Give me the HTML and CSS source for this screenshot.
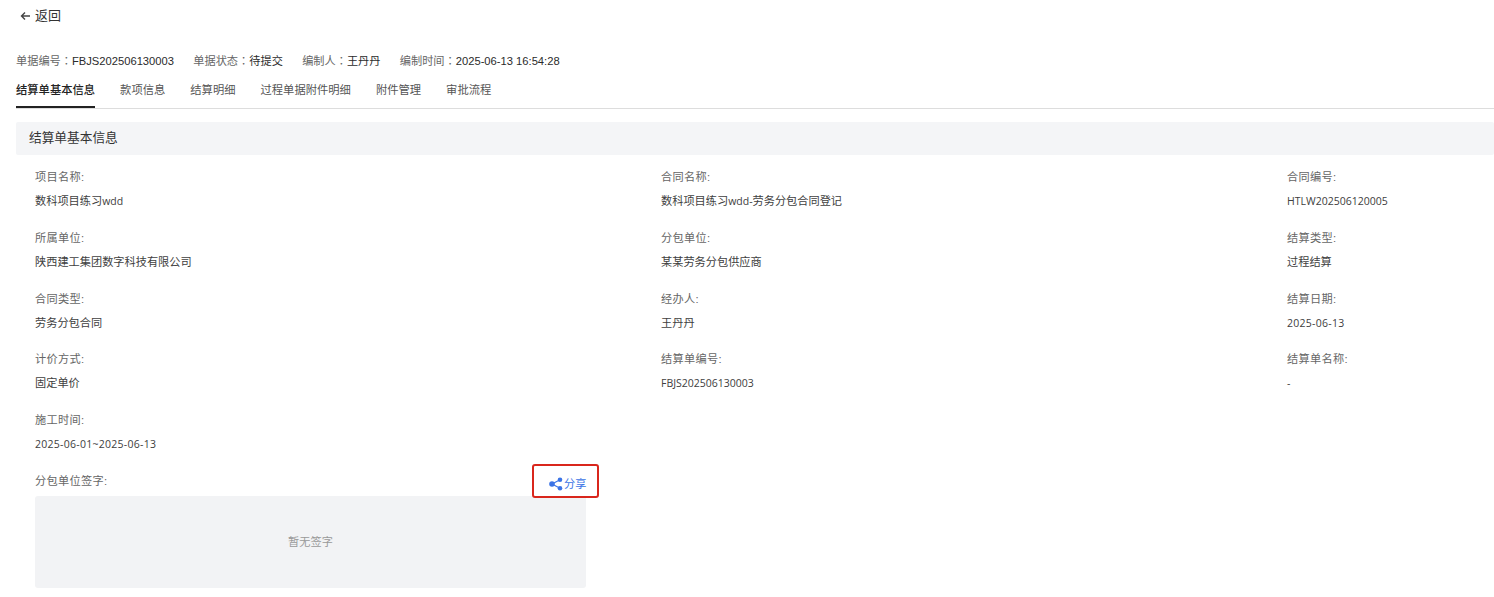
FILE: index.html
```html
<!DOCTYPE html>
<html lang="zh">
<head>
<meta charset="utf-8">
<title>结算单基本信息</title>
<link rel="stylesheet" href="styles.css">
</head>
<body>
<div class="back">
  <svg class="back-icon" width="11" height="10" viewBox="0 0 11 10" fill="none" stroke="#444" stroke-width="1.4"><path d="M10 5H1.500M5 1.500 1.500 5 5 8.500"/></svg>
  <span>返回</span>
</div>
<div class="meta">
  <span><i>单据编号<b lang="zh-Hant">：</b></i>FBJS202506130003</span>
  <span><i>单据状态<b lang="zh-Hant">：</b></i>待提交</span>
  <span><i>编制人<b lang="zh-Hant">：</b></i>王丹丹</span>
  <span><i>编制时间<b lang="zh-Hant">：</b></i>2025-06-13 16:54:28</span>
</div>
<nav class="tabs">
  <a class="tab active">结算单基本信息</a>
  <a class="tab">款项信息</a>
  <a class="tab">结算明细</a>
  <a class="tab">过程单据附件明细</a>
  <a class="tab">附件管理</a>
  <a class="tab">审批流程</a>
</nav>
<h2 class="section">结算单基本信息</h2>
<div class="grid">
  <div class="field"><label>项目名称:</label><p>数科项目练习<span class="lat">wdd</span></p></div>
  <div class="field"><label>合同名称:</label><p>数科项目练习<span class="lat">wdd-</span>劳务分包合同登记</p></div>
  <div class="field"><label>合同编号:</label><p class="lat">HTLW202506120005</p></div>
  <div class="field"><label>所属单位:</label><p>陕西建工集团数字科技有限公司</p></div>
  <div class="field"><label>分包单位:</label><p>某某劳务分包供应商</p></div>
  <div class="field"><label>结算类型:</label><p>过程结算</p></div>
  <div class="field"><label>合同类型:</label><p>劳务分包合同</p></div>
  <div class="field"><label>经办人:</label><p>王丹丹</p></div>
  <div class="field"><label>结算日期:</label><p class="lat date">2025-06-13</p></div>
  <div class="field"><label>计价方式:</label><p>固定单价</p></div>
  <div class="field"><label>结算单编号:</label><p class="lat">FBJS202506130003</p></div>
  <div class="field"><label>结算单名称:</label><p class="lat">-</p></div>
  <div class="field"><label>施工时间:</label><p class="lat date">2025-06-01~2025-06-13</p></div>
</div>
<div class="sign">
  <div class="sign-head">
    <label>分包单位签字:</label>
    <button class="share" type="button">
      <svg width="14" height="14" viewBox="0 0 14 14" fill="#3b74e6"><circle cx="3" cy="7" r="2.800"/><circle cx="11" cy="2.800" r="2.300"/><circle cx="11" cy="11.200" r="2.300"/><path d="M3 7 11 2.800M3 7l8 4.200" stroke="#3b74e6" stroke-width="1.200"/></svg>
      <span>分享</span>
    </button>
  </div>
  <div class="sign-box">暂无签字</div>
</div>
</body>
</html>
```
FILE: styles.css
```css
* { box-sizing: border-box; }
html, body { margin: 0; }
body {
  height: 597px;
  overflow: hidden;
  padding-left: 16px;
  background: #fff;
  color: #2b2b2b;
  font-family: "Liberation Sans", "Noto Sans CJK SC", sans-serif;
  font-size: 11.2px;
  line-height: 16px;
}
.back {
  display: flex;
  align-items: center;
  gap: 4px;
  height: 32px;
  padding-left: 4px;
  font-size: 13px;
  color: #333;
}
.back-icon { flex: none; }
.meta {
  display: flex;
  gap: 19.300px;
  margin-top: 20px;
  height: 17px;
}
.meta i { font-style: normal; color: #666; }
.meta b { font-family: "Noto Sans CJK TC", sans-serif; font-weight: 400; }
.tabs {
  display: flex;
  gap: 25px;
  margin-top: 7px;
  height: 33px;
  border-bottom: 1px solid #ddd;
  font-size: 11.300px;
}
.tab { color: #555; height: 32px; padding-top: 6px; }
.tab.active {
  color: #222;
  font-weight: 500;
  border-bottom: 2px solid #222;
}
.section {
  margin: 13px 0 0;
  height: 33px;
  padding-left: 13px;
  background: #f4f5f7;
  border-radius: 2px;
  font-size: 12.700px;
  font-weight: 400;
  line-height: 32px;
  color: #333;
}
.grid {
  display: grid;
  grid-template-columns: 626px 626px 1fr;
  grid-auto-rows: 60.800px;
  margin-top: 14px;
  padding-left: 19px;
}
label { display: block; color: #666; letter-spacing: 0.3px; }
.field p { margin: 8px 0 0; color: #404040; }
.lat { font-family: "Open Sans", "Noto Sans CJK SC", sans-serif; font-size: 10.500px; }
.date { letter-spacing: 0.27px; }
.sign { width: 570px; margin-left: 19px; margin-top: -9px; }
.sign-head {
  display: flex;
  justify-content: space-between;
  align-items: center;
  height: 34px;
}
.share {
  display: flex;
  align-items: center;
  gap: 1px;
  width: 67px;
  height: 34px;
  padding: 6px 0 0 15px;
  margin-right: 6px;
  border: 2px solid #d9261c;
  border-radius: 3px;
  background: #fff;
  color: #3b74e6;
  font: inherit;
}
.sign-box {
  display: flex;
  align-items: center;
  justify-content: center;
  width: 551px;
  height: 92px;
  margin-top: -2px;
  background: #f2f3f5;
  border-radius: 3px;
  color: #999;
}
```
